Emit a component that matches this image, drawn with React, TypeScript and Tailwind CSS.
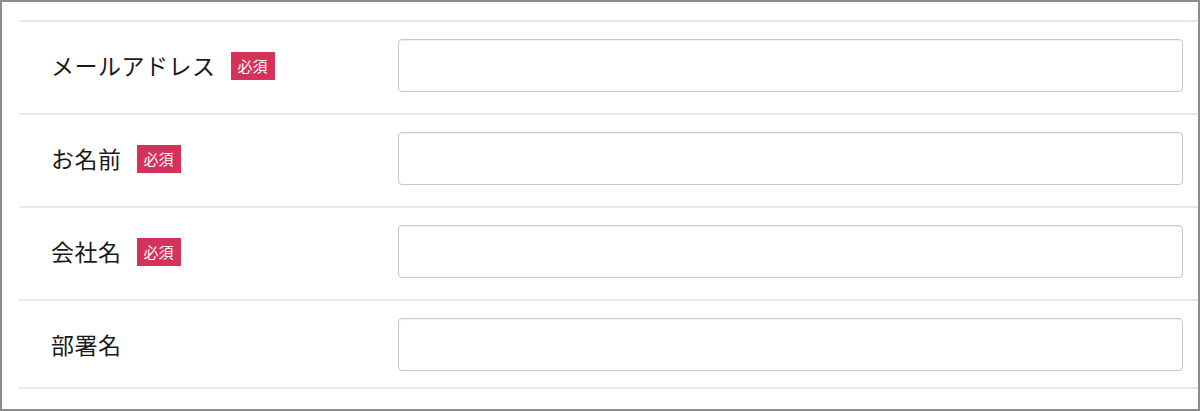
const FIELDS = [
  { label: "メールアドレス", required: true },
  { label: "お名前", required: true },
  { label: "会社名", required: true },
  { label: "部署名", required: false },
];

function Row({ label, required, last }: { label: string; required: boolean; last: boolean }) {
  return (
    <div
      className={`flex items-center border-t-2 border-[#e1eaf0] pt-[17px] ${
        last ? "border-b-2 pb-[16px]" : "pb-[21px]"
      }`}
    >
      <div className="flex w-[379px] shrink-0 items-center pl-[32px]">
        <span className="text-[23px] leading-none tracking-[0.5px] text-[#1a1a1a]">{label}</span>
        {required && (
          <span className="ml-[15px] flex h-[28px] items-center bg-[#d4325a] px-[7px] text-[15px] leading-none text-white">
            必須
          </span>
        )}
      </div>
      <input
        type="text"
        className="h-[53px] w-[785px] rounded-[4px] border border-[#c9c9c9] bg-white px-3 shadow-[inset_0_1px_1px_rgba(0,0,0,0.06)] outline-none"
      />
    </div>
  );
}

export default function App() {
  return (
    <div
      className="h-[411px] w-[1200px] border-2 border-[#8c8c8c] bg-white pl-[17px] pt-[18px]"
      style={{ fontFamily: '"Noto Sans CJK JP", "Noto Sans", sans-serif' }}
    >
      {FIELDS.map((f, i) => (
        <Row key={f.label} label={f.label} required={f.required} last={i === FIELDS.length - 1} />
      ))}
    </div>
  );
}
